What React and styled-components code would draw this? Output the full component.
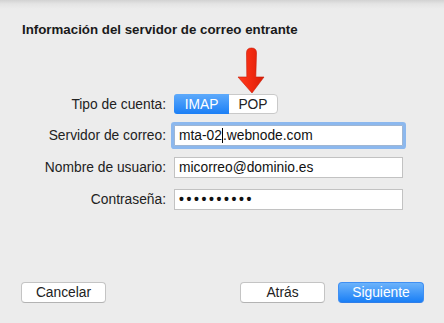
import React from 'react';
import styled, { createGlobalStyle } from 'styled-components';

const Global = createGlobalStyle`
    html, body {
        margin: 0;
        padding: 0;
        background: #ececec;
    }
    body {
        font-family: "Liberation Sans", Arial, sans-serif;
        color: #222;
    }
`
const Sheet = styled.div`
    width: 444px;
    height: 323px;
    box-sizing: border-box;
    background: linear-gradient(#d2d2d2 0px, #e4e4e4 4px, #ececec 9px, #ececec 100%);
    padding: 22px 20px 0 22px;
    display: flex;
    flex-direction: column;
`
const Title = styled.h1`
    margin: 0;
    font-size: 13.3px;
    line-height: 16px;
    font-weight: bold;
    color: #1a1a1a;
`
const Form = styled.div`
    display: grid;
    grid-template-columns: 144px 229px;
    grid-template-rows: 20px 21px 21px 21px;
    column-gap: 8px;
    row-gap: 11px;
    margin-top: 56px;
`
const Label = styled.div`
    font-size: 13.8px;
    text-align: right;
    display: flex;
    align-items: center;
    justify-content: flex-end;
    white-space: nowrap;
    color: #222;
`
const Segmented = styled.div`
    position: relative;
    display: flex;
    width: 104px;
    height: 20px;
    box-sizing: border-box;
    border: 1px solid #c9c9c9;
    border-radius: 4px;
    background: #fff;
`
const Segment = styled.div`
    flex: ${p => p.$grow};
    display: flex;
    align-items: center;
    justify-content: center;
    font-size: 13.8px;
    color: ${p => (p.$on ? '#fff' : '#222')};
    background: ${p => (p.$on ? 'linear-gradient(#5eaafb, #1b7ff6)' : 'transparent')};
    border-radius: ${p => (p.$on ? '3px 0 0 3px' : '0')};
    margin: ${p => (p.$on ? '-1px 0 -1px -1px' : '0')};
`
const Arrow = styled.svg`
    position: absolute;
    left: 62px;
    top: -48px;
    width: 28px;
    height: 48px;
`
const Field = styled.div`
    box-sizing: border-box;
    height: 21px;
    border: 1px solid ${p => (p.$focus ? '#9fb6d3' : '#c2c2c2')};
    background: #fff;
    font-size: 13.8px;
    line-height: 19px;
    padding-left: 4px;
    color: #111;
    white-space: nowrap;
    box-shadow: ${p => (p.$focus ? '0 0 0 3px #8cb8ee' : 'none')};
    border-radius: ${p => (p.$focus ? '1px' : '0')};
`
const Dots = styled.span`
    letter-spacing: 2.6px;
    font-size: 14px;
    font-weight: bold;
`
const Caret = styled.span`
    display: inline-block;
    width: 1px;
    height: 15px;
    background: #000;
    vertical-align: -3px;
`
const Footer = styled.div`
    margin-top: auto;
    margin-bottom: 20px;
    margin-left: -1px;
    display: flex;
    align-items: center;
    gap: 13px;
`
const Button = styled.button`
    box-sizing: border-box;
    width: ${p => p.$w}px;
    height: 21px;
    padding: 0;
    font-family: inherit;
    font-size: 13.8px;
    border-radius: 4px;
    border: 1px solid ${p => (p.$primary ? '#3f8ff3' : '#c4c4c4')};
    border-bottom-color: ${p => (p.$primary ? '#2f7ee8' : '#b3b3b3')};
    background: ${p => (p.$primary ? 'linear-gradient(#6cb3fb, #1a7ff6)' : '#fff')};
    color: ${p => (p.$primary ? '#fff' : '#222')};
    &:first-child {
        margin-right: auto;
    }
`

export default function App() {
    return (
        <Sheet>
            <Global />
            <Title>Información del servidor de correo entrante</Title>
            <Form>
                <Label>Tipo de cuenta:</Label>
                <div>
                    <Segmented>
                        <Segment $on $grow={55}>IMAP</Segment>
                        <Segment $grow={48}>POP</Segment>
                        <Arrow viewBox="0 0 28 48">
                            <defs>
                                <linearGradient id="ar" x1="0" y1="0" x2="1" y2="0">
                                    <stop offset="0" stopColor="#ff3b1f" />
                                    <stop offset="0.5" stopColor="#f22a10" />
                                    <stop offset="1" stopColor="#d81e08" />
                                </linearGradient>
                            </defs>
                            <path
                                d="M9.5 6 Q9.5 1 14.5 1 Q19.5 1 19.5 6 L18.8 30 L27 30 L15 46 L1 30 L9.8 30 Z"
                                fill="url(#ar)"
                                stroke="#c81a05"
                                strokeWidth="0.6"
                                strokeLinejoin="round"
                            />
                        </Arrow>
                    </Segmented>
                </div>
                <Label>Servidor de correo:</Label>
                <Field $focus>mta-02<Caret />.webnode.com</Field>
                <Label>Nombre de usuario:</Label>
                <Field>micorreo@dominio.es</Field>
                <Label>Contraseña:</Label>
                <Field><Dots>••••••••••</Dots></Field>
            </Form>
            <Footer>
                <Button $w={85}>Cancelar</Button>
                <Button $w={85}>Atrás</Button>
                <Button $w={86} $primary>Siguiente</Button>
            </Footer>
        </Sheet>
    );
}
